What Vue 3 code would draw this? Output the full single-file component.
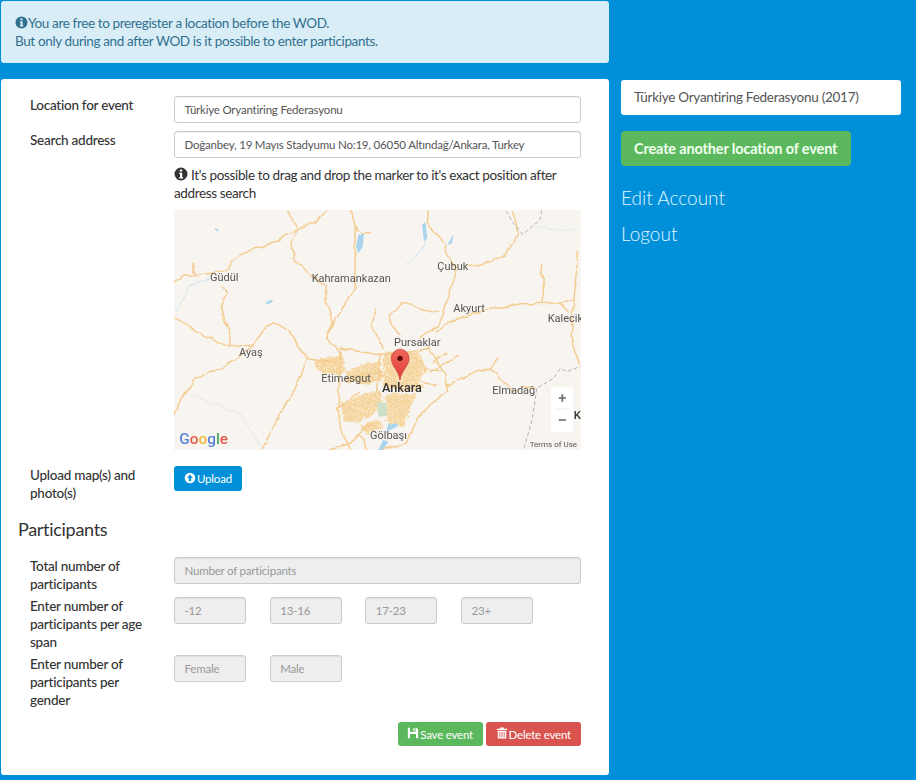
<script setup>
const roads = [
  'M12 232 L45 212 L68 214 L70 175 L76 212 L120 205 L176 195 L180 168 L215 150 L250 130 L300 118 L340 95 L385 75 L365 40 L350 18',
  'M385 75 L430 50 L470 18',
  'M385 75 L366 108 L370 160 L400 185 L430 215 L465 240 L470 300 L490 350 L470 400 L510 440',
  'M543 15 L555 65 L575 80 L605 80 M555 65 L555 170 L555 250 L525 300 L500 340 L470 400',
  'M775 18 L772 50 L810 100 L835 150 L858 205 L840 260 L825 300 L805 365 L755 395',
  'M895 185 L960 170 L1005 150 L1045 85 L1028 18',
  'M805 322 L750 310 L700 292 L655 330 L665 360 L690 392',
  'M800 380 L850 345 L950 315 L1050 296 L1170 295 L1212 280 L1225 140',
  'M1115 180 L1112 205 L1125 240 L1115 295',
  'M1170 295 L1195 320 M1212 280 L1205 350 L1208 420 L1228 480',
  'M12 340 L60 365 L100 392 L150 410 L180 425 L250 420 L280 375 L310 350 L360 380 L385 420 L412 462',
  'M155 250 L175 262 L153 300 L165 350 L180 385 L180 425',
  'M12 640 L30 580 L80 520 L170 482 L212 452 L250 420',
  'M412 462 L375 555 L325 635 L278 730',
  'M620 310 L605 360 L625 400 L640 430',
  'M510 430 L600 445 L700 445 L780 430 L825 510 L830 560 L780 600 L745 640 L705 715 L640 733',
  'M830 540 L905 505 L960 490 L985 462 M960 490 L1030 560 L1060 545 L1100 550',
  'M500 610 L520 690 L540 730 M600 660 L540 715 L480 735',
  'M790 470 L830 445 M780 500 L865 455',
  'M412 462 L500 470 M510 440 L505 600 M630 445 L620 560 M520 520 L640 500',
  'M745 530 L800 540 M770 490 L820 500 M500 610 L570 560 M570 690 L590 730',
]
const cityBlocks = [
  'M430 465 L470 458 L520 452 L525 505 L460 508 L440 490 Z',
  'M530 500 L590 475 L630 470 L640 520 L600 540 L530 530 Z',
  'M640 440 L745 440 L770 490 L745 530 L765 550 L700 560 L640 545 Z',
  'M510 600 L560 575 L625 555 L640 590 L610 625 L570 650 L525 650 Z',
  'M645 565 L740 565 L720 620 L700 665 L650 650 Z',
  'M570 665 L620 640 L640 665 L590 690 Z',
]
const labels = [
  { t: 'Güdül', x: 120, y: 229 },
  { t: 'Kahramankazan', x: 425, y: 232 },
  { t: 'Çubuk', x: 802, y: 196 },
  { t: 'Akyurt', x: 850, y: 321 },
  { t: 'Kalecik', x: 1133, y: 350 },
  { t: 'Pursaklar', x: 672, y: 424 },
  { t: 'Ayaş', x: 207, y: 453 },
  { t: 'Etimesgut', x: 454, y: 530 },
  { t: 'Elmadağ', x: 967, y: 566 },
  { t: 'Gölbaşı', x: 600, y: 703 },
]
</script>

<template>
  <div class="page">
    <main class="main">
      <div class="alert">
        <div class="alert-line">
          <svg class="ico" viewBox="0 0 14 14"><use href="#info" /></svg>You are free to preregister a location before the WOD.
        </div>
        <div>But only during and after WOD is it possible to enter participants.</div>
      </div>

      <svg width="0" height="0" class="defs">
        <symbol id="info" viewBox="0 0 14 14">
          <path fill="currentColor" fill-rule="evenodd" d="M7 .5a6.500 6.500 0 1 0 0 13 6.500 6.500 0 0 0 0-13ZM5.800 2.600h2.400v1.900H5.800ZM5.200 5.700h3v4.300h.8v1.400H5.200V10H6V7.100h-.8Z" />
        </symbol>
      </svg>

      <section class="card">
        <div class="form-row">
          <label class="lbl">Location for event</label>
          <input class="input" value="Türkiye Oryantiring Federasyonu" />
        </div>
        <div class="form-row">
          <label class="lbl">Search address</label>
          <div class="field">
            <input class="input" value="Doğanbey, 19 Mayıs Stadyumu No:19, 06050 Altındağ/Ankara, Turkey" />
            <p class="hint">
              <svg class="ico dark" viewBox="0 0 14 14"><use href="#info" /></svg>
              It's possible to drag and drop the marker to it's exact position after address search
            </p>
            <div class="map">
              <svg class="map-svg" viewBox="12 15 1221 720" width="407" height="240">
                <defs>
                  <pattern id="streets" width="10" height="10" patternUnits="userSpaceOnUse" patternTransform="rotate(18)">
                    <rect width="10" height="10" fill="#f5d49c" />
                    <rect x="2" y="3" width="5" height="4" fill="#fcf0da" />
                  </pattern>
                  <filter id="wiggle" x="-5%" y="-5%" width="110%" height="110%">
                    <feTurbulence type="fractalNoise" baseFrequency="0.03" numOctaves="2" seed="4" />
                    <feDisplacementMap in="SourceGraphic" scale="16" xChannelSelector="R" yChannelSelector="G" />
                  </filter>
                  <filter id="rag" x="-5%" y="-5%" width="110%" height="110%">
                    <feTurbulence type="fractalNoise" baseFrequency="0.08" numOctaves="2" seed="9" />
                    <feDisplacementMap in="SourceGraphic" scale="22" xChannelSelector="R" yChannelSelector="G" />
                  </filter>
                  <linearGradient id="pin" x1="0" y1="0" x2="0" y2="1">
                    <stop offset="0" stop-color="#f0675e" />
                    <stop offset="1" stop-color="#e03c32" />
                  </linearGradient>
                </defs>
                <rect x="12" y="15" width="1221" height="720" fill="#f8f5f1" />
                <g fill="none" stroke="#c9e1f0" stroke-width="2.500" filter="url(#wiggle)">
                  <path d="M15 320 L35 290 L60 240 L120 222" />
                  <path d="M60 570 L130 595 L205 625 L245 680 L270 725" stroke="#dfe6e6" />
                  <path d="M1100 65 L1170 75 L1232 70" stroke="#dcebf0" />
                  <path d="M705 175 L745 150 L772 110" />
                </g>
                <g fill="#a8d4ee">
                  <path d="M565 90 L582 85 L578 125 L565 145 L558 125 Z" />
                  <path d="M756 60 L766 50 L772 100 L762 110 Z" />
                  <path d="M832 120 L850 88 L846 115 Z" />
                  <ellipse cx="298" cy="291" rx="11" ry="4" transform="rotate(-20 298 291)" />
                  <ellipse cx="140" cy="74" rx="6" ry="3" transform="rotate(30 140 74)" />
                  <path d="M655 655 L695 640 L680 665 L650 680 Z" />
                  <path d="M640 705 L655 710 L640 735 L625 735 Z" />
                </g>
                <g fill="url(#streets)" filter="url(#rag)">
                  <path v-for="b in cityBlocks" :key="b" :d="b" />
                </g>
                <path d="M622 590 L650 595 L652 632 L625 635 Z" fill="#cfe0c9" />
                <g fill="none" stroke="#f4cd92" stroke-width="4.500" stroke-linejoin="round" stroke-linecap="round" filter="url(#wiggle)">
                  <path v-for="r in roads" :key="r" :d="r" />
                </g>
                <g fill="none" stroke="#a3a6a6" stroke-width="2.500" stroke-dasharray="12 7">
                  <path d="M1008 18 L1030 55 L1058 88 L1110 45 L1115 16" />
                  <path d="M1062 730 L1085 650 L1095 590 L1100 550 L1150 520 L1172 490 L1190 500 L1232 484" />
                </g>
                <g class="map-label">
                  <text v-for="l in labels" :key="l.t" :x="l.x" :y="l.y">{{ l.t }}</text>
                  <text class="city" x="636" y="560">Ankara</text>
                </g>
                <path d="M690 525 C686 495 664 485 664 460 A26 27 0 0 1 717 460 C717 485 694 495 690 525 Z" fill="url(#pin)" stroke="#c5372e" stroke-width="2" />
                <circle cx="690" cy="460" r="8" fill="#5c0a08" />
                <text class="map-k" x="1211" y="642">K</text>
                <rect x="1143" y="547" width="67" height="133" rx="4" fill="#fff" />
                <path d="M1153 612H1200" stroke="#e3e3e3" stroke-width="2" />
                <path d="M1166 579H1188M1177 568V590M1166 645H1188" stroke="#666" stroke-width="5" />
                <text class="g-logo" x="28" y="717"><tspan fill="#5a86d6">G</tspan><tspan fill="#e25a4a">o</tspan><tspan fill="#eeb93b">o</tspan><tspan fill="#5a86d6">g</tspan><tspan fill="#4ba75c">l</tspan><tspan fill="#e25a4a">e</tspan></text>
                <text class="terms" x="1079" y="725">Terms of Use</text>
              </svg>
            </div>
          </div>
        </div>
        <div class="form-row upload-row">
          <label class="lbl">Upload map(s) and photo(s)</label>
          <div>
            <button class="btn btn-blue upload" type="button">
              <svg class="ico small" viewBox="0 0 14 14"><path fill="currentColor" fill-rule="evenodd" d="M7 .8a6.200 6.200 0 1 0 0 12.400A6.200 6.200 0 0 0 7 .8ZM7 3 10.400 7H8.300v3.800H5.700V7H3.600Z" /></svg>Upload
            </button>
          </div>
        </div>

        <h3 class="section">Participants</h3>

        <div class="form-row tight">
          <label class="lbl">Total number of participants</label>
          <input class="input" disabled placeholder="Number of participants" />
        </div>
        <div class="form-row tight">
          <label class="lbl">Enter number of participants per age span</label>
          <div class="quad">
            <input class="input" disabled placeholder="-12" />
            <input class="input" disabled placeholder="13-16" />
            <input class="input" disabled placeholder="17-23" />
            <input class="input" disabled placeholder="23+" />
          </div>
        </div>
        <div class="form-row tight">
          <label class="lbl">Enter number of participants per gender</label>
          <div class="quad">
            <input class="input" disabled placeholder="Female" />
            <input class="input" disabled placeholder="Male" />
          </div>
        </div>

        <div class="actions">
          <button class="btn btn-green" type="button">
            <svg class="ico small up" viewBox="0 0 14 14"><path fill="currentColor" fill-rule="evenodd" d="M1 1h2.500v4.500h6.500V1h1.200L13 2.800V13H1ZM7.300 1.400h1.700v3H7.300ZM3.500 8.200V13h7V8.200Z" /></svg>Save event
          </button>
          <button class="btn btn-red" type="button">
            <svg class="ico small up" viewBox="0 0 14 14"><path fill="currentColor" fill-rule="evenodd" d="M5 .5h4l.6 1.500H13v1.400H1V2h3.400ZM2 4.300h10V13.500H2Zm2 1.400v6.300h1V5.700Zm2.500 0v6.300h1V5.700Zm2.500 0v6.300h1V5.700Z" /></svg>Delete event
          </button>
        </div>
      </section>
    </main>

    <aside class="side">
      <a class="loc">Türkiye Oryantiring Federasyonu (2017)</a>
      <button class="create" type="button">Create another location of event</button>
      <a class="nav-link first">Edit Account</a>
      <a class="nav-link">Logout</a>
    </aside>
  </div>
</template>

<style>
html, body { margin: 0; background: #0090d9; }
</style>

<style scoped>
.page {
  display: flex;
  align-items: flex-start;
  width: 916px;
  height: 780px;
  overflow: hidden;
  background: #0090d9;
  font-family: Lato, "Liberation Sans", sans-serif;
  font-size: 13.5px;
  letter-spacing: -.37px;
  line-height: 18px;
  color: #333;
  box-sizing: border-box;
  padding: 1px 0 0 1px;
}
.main { width: 608px; flex: none; }
.defs { position: absolute; }
.alert {
  height: 62px;
  box-sizing: border-box;
  padding: 13px 14px;
  background: #d9edf7;
  border-radius: 3px;
  color: #31708f;
}
.ico { width: 13px; height: 13px; vertical-align: -1px; color: #31708f; }
.ico.dark { color: #333; width: 14px; height: 14px; vertical-align: -1px; }
.ico.small { color: #fff; width: 12px; height: 12px; margin-right: 1px; vertical-align: -1px; }
.ico.small.up { vertical-align: 0; }
.card {
  margin-top: 16px;
  height: 696px;
  box-sizing: border-box;
  padding: 17px 28px 0 17px;
  background: #fff;
  border-radius: 3px;
}
.form-row {
  display: grid;
  grid-template-columns: 144px 407px;
  padding-left: 12px;
  margin-bottom: 8px;
}
.form-row.tight { margin-bottom: 4px; }
.lbl {
  font-weight: 500;
  letter-spacing: -.25px;
  color: #333;
  padding-right: 14px;
}
.field { display: flex; flex-direction: column; }
.input {
  display: block;
  box-sizing: border-box;
  width: 100%;
  height: 27px;
  padding: 0 9.5px;
  font: 11.5px Lato, "Liberation Sans", sans-serif;
  letter-spacing: -.2px;
  color: #555;
  background: #fff;
  border: 1px solid #ccc;
  border-radius: 3px;
  box-shadow: inset 0 1px 1px rgba(0, 0, 0, .075);
  outline: none;
}
.input:disabled { background: #eee; }
.input::placeholder { color: #999; opacity: 1; }
.hint { margin: 8px 0 8px; }
.map { width: 407px; height: 240px; }
.map-svg { display: block; filter: blur(.4px); letter-spacing: 0; }
.map-label text { font: 33px Roboto, sans-serif; fill: #555; }
.map-label .city { font-size: 38px; font-weight: 500; fill: #333; }
.map-k { font: 500 34px Roboto, sans-serif; fill: #333; }
.g-logo { font: 500 46px Roboto, "Liberation Sans", sans-serif; }
.terms { font: 24px Roboto, sans-serif; fill: #555; }
.upload-row { margin-top: 16px; margin-bottom: 0; }
.btn {
  font: 11.5px Lato, "Liberation Sans", sans-serif;
  letter-spacing: -.2px;
  color: #fff;
  border: 0;
  border-radius: 3px;
  height: 24px;
  padding: 0 9px;
  white-space: nowrap;
}
.btn-blue { background: #0090d9; }
.upload { height: 25px; padding: 0 10px; }
.btn-green { background: #5cb85c; padding: 0 9.5px; }
.btn-red { background: #d9534f; padding: 0 10px; }
.section {
  margin: 16px 0 17px;
  font-size: 18px;
  font-weight: 400;
  letter-spacing: -.3px;
  line-height: 22px;
  color: #333;
}
.quad {
  display: grid;
  grid-template-columns: repeat(4, 72px);
  column-gap: 23.67px;
  align-items: start;
}
.actions {
  display: flex;
  justify-content: flex-end;
  gap: 3px;
  margin-top: 13px;
}
.side {
  width: 280px;
  margin: 79px 0 0 12px;
  display: flex;
  flex-direction: column;
  align-items: flex-start;
}
.loc {
  display: block;
  box-sizing: border-box;
  width: 280px;
  height: 35px;
  padding: 0 13px;
  line-height: 35px;
  letter-spacing: -.27px;
  background: #fff;
  border-radius: 3px;
  color: #555;
}
.create {
  margin-top: 16px;
  width: 230px;
  height: 35px;
  padding: 0 0 0 13px;
  text-align: left;
  border: 0;
  border-radius: 4px;
  background: #5cb85c;
  color: #f0fff0;
  font: 700 14.5px Lato, "Liberation Sans", sans-serif;
  letter-spacing: -.15px;
}
.nav-link {
  display: block;
  font-size: 19px;
  font-weight: 300;
  letter-spacing: 0;
  line-height: 24px;
  color: #e0f7ff;
  margin-top: 12px;
}
.nav-link.first { margin-top: 20px; }
</style>
